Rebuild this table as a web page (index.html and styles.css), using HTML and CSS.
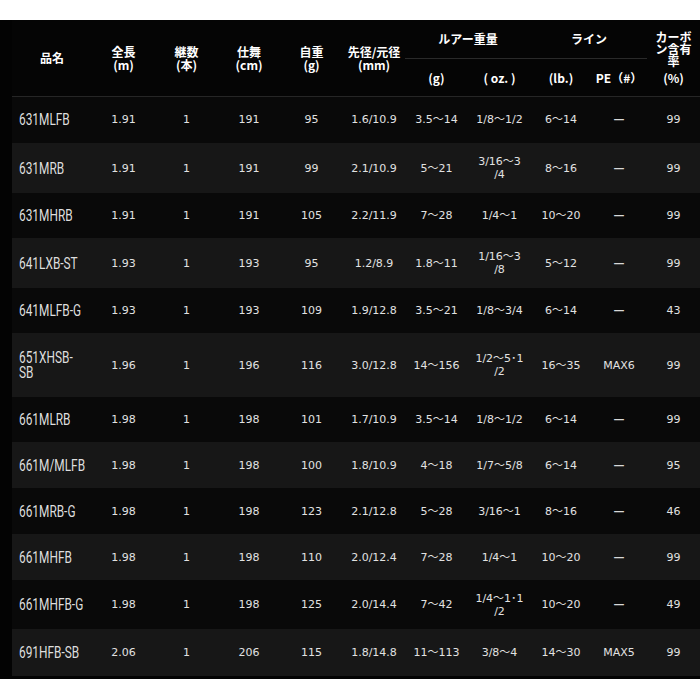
FILE: index.html
```html
<!DOCTYPE html>
<html lang="ja">
<head>
<meta charset="utf-8">
<title>Spec</title>
<link rel="stylesheet" href="styles.css">
</head>
<body>
<div class="spec">
  <table class="spec-table">
    <colgroup>
      <col class="c-name"><col class="c-63"><col class="c-63"><col class="c-62"><col class="c-63"><col class="c-62"><col class="c-63"><col class="c-63"><col class="c-60"><col class="c-56"><col class="c-53">
    </colgroup>
    <thead>
      <tr class="hr1">
        <th rowspan="2" class="hb">品名</th>
        <th rowspan="2" class="hb">全長<br>(m)</th>
        <th rowspan="2" class="hb">継数<br>(本)</th>
        <th rowspan="2" class="hb">仕舞<br>(cm)</th>
        <th rowspan="2" class="hb">自重<br>(g)</th>
        <th rowspan="2" class="hb">先径/元径<br>(mm)</th>
        <th colspan="2" class="group">ルアー重量</th>
        <th colspan="2" class="group">ライン</th>
        <th rowspan="2" class="hb carbon-cell"><span class="carbon">カーボン含有率</span><span class="unit">(%)</span></th>
      </tr>
      <tr class="hr2">
        <th class="hb">(g)</th>
        <th class="hb">( oz. )</th>
        <th class="hb">(lb.)</th>
        <th class="hb">PE（#）</th>
      </tr>
    </thead>
    <tbody>
      <tr class="h47"><td class="name"><span class="nm">631MLFB</span></td><td>1.91</td><td>1</td><td>191</td><td>95</td><td>1.6/10.9</td><td>3.5～14</td><td>1/8～1/2</td><td>6～14</td><td class="dash">—</td><td>99</td></tr>
      <tr class="h50"><td class="name"><span class="nm">631MRB</span></td><td>1.91</td><td>1</td><td>191</td><td>99</td><td>2.1/10.9</td><td>5～21</td><td>3/16～3<br>/4</td><td>8～16</td><td class="dash">—</td><td>99</td></tr>
      <tr class="h45"><td class="name"><span class="nm">631MHRB</span></td><td>1.91</td><td>1</td><td>191</td><td>105</td><td>2.2/11.9</td><td>7～28</td><td>1/4～1</td><td>10～20</td><td class="dash">—</td><td>99</td></tr>
      <tr class="h50"><td class="name"><span class="nm">641LXB-ST</span></td><td>1.93</td><td>1</td><td>193</td><td>95</td><td>1.2/8.9</td><td>1.8～11</td><td>1/16～3<br>/8</td><td>5～12</td><td class="dash">—</td><td>99</td></tr>
      <tr class="h45"><td class="name"><span class="nm">641MLFB-G</span></td><td>1.93</td><td>1</td><td>193</td><td>109</td><td>1.9/12.8</td><td>3.5～21</td><td>1/8～3/4</td><td>6～14</td><td class="dash">—</td><td>43</td></tr>
      <tr class="h64"><td class="name"><span class="nm">651XHSB-<br>SB</span></td><td>1.96</td><td>1</td><td>196</td><td>116</td><td>3.0/12.8</td><td>14～156</td><td>1/2～5･1<br>/2</td><td>16～35</td><td>MAX6</td><td>99</td></tr>
      <tr class="h45"><td class="name"><span class="nm">661MLRB</span></td><td>1.98</td><td>1</td><td>198</td><td>101</td><td>1.7/10.9</td><td>3.5～14</td><td>1/8～1/2</td><td>6～14</td><td class="dash">—</td><td>99</td></tr>
      <tr class="h46"><td class="name"><span class="nm">661M/MLFB</span></td><td>1.98</td><td>1</td><td>198</td><td>100</td><td>1.8/10.9</td><td>4～18</td><td>1/7～5/8</td><td>6～14</td><td class="dash">—</td><td>95</td></tr>
      <tr class="h46"><td class="name"><span class="nm">661MRB-G</span></td><td>1.98</td><td>1</td><td>198</td><td>123</td><td>2.1/12.8</td><td>5～28</td><td>3/16～1</td><td>8～16</td><td class="dash">—</td><td>46</td></tr>
      <tr class="h46"><td class="name"><span class="nm">661MHFB</span></td><td>1.98</td><td>1</td><td>198</td><td>110</td><td>2.0/12.4</td><td>7～28</td><td>1/4～1</td><td>10～20</td><td class="dash">—</td><td>99</td></tr>
      <tr class="h49"><td class="name"><span class="nm">661MHFB-G</span></td><td>1.98</td><td>1</td><td>198</td><td>125</td><td>2.0/14.4</td><td>7～42</td><td>1/4～1･1<br>/2</td><td>10～20</td><td class="dash">—</td><td>49</td></tr>
      <tr class="h47"><td class="name"><span class="nm">691HFB-SB</span></td><td>2.06</td><td>1</td><td>206</td><td>115</td><td>1.8/14.8</td><td>11～113</td><td>3/8～4</td><td>14～30</td><td>MAX5</td><td>99</td></tr>
    </tbody>
  </table>
</div>
</body>
</html>
```

FILE: styles.css
```css
* { box-sizing: border-box; }

html, body {
  margin: 0;
  background: #ffffff;
}

.spec {
  margin-top: 20px;
  background: #030303;
  padding: 0 0 3px 12px;
}

.spec-table {
  width: 688px;
  border-collapse: collapse;
  table-layout: fixed;
  font-family: "DejaVu Sans", "Noto Sans CJK JP", sans-serif;
  font-size: 11px;
  color: #e2e2e2;
}

.c-name { width: 80px; }
.c-63 { width: 63px; }
.c-62 { width: 62px; }
.c-60 { width: 60px; }
.c-56 { width: 56px; }
.c-53 { width: 53px; }

.spec-table th {
  font-family: "Noto Sans CJK JP", sans-serif;
  font-weight: 700;
  font-size: 12px;
  line-height: 13px;
  color: #ffffff;
  padding: 0;
  text-align: center;
  vertical-align: middle;
  background: #050505;
}

.hr1 { height: 38px; }
.hr2 { height: 38px; }

.spec-table th.group {
  border-bottom: 1px solid #2a2a2a;
}

.spec-table th.hb {
  border-bottom: 1px solid #262626;
}

.carbon-cell { padding: 0 4px; }
.carbon { display: block; padding: 0 4px; line-height: 12px; }
.unit { display: block; margin-top: 4px; }

.spec-table td {
  padding: 0;
  text-align: center;
  vertical-align: middle;
  line-height: 13px;
}

.spec-table td.dash {
  font-weight: 700;
  color: #d8d8d8;
}

.spec-table td.name {
  text-align: left;
  padding-left: 7px;
  font-family: "Roboto", "Liberation Sans", sans-serif;
  font-size: 16.5px;
  line-height: 15px;
  color: #dedede;
  white-space: nowrap;
}

.nm {
  display: inline-block;
  transform: scaleX(0.72);
  transform-origin: left center;
}

.spec-table tbody tr:nth-child(odd) { background: #090909; }
.spec-table tbody tr:nth-child(even) { background: #171717; }

.h45 { height: 45px; }
.h46 { height: 46px; }
.h47 { height: 47px; }
.h49 { height: 49px; }
.h50 { height: 50px; }
.h64 { height: 64px; }
```
